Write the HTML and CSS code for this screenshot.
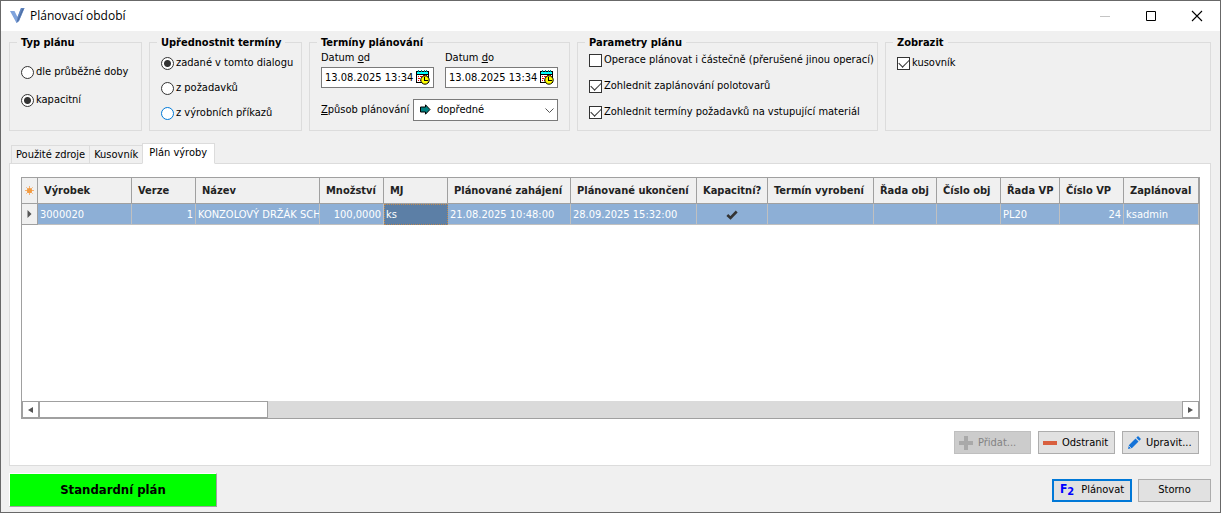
FILE: index.html
```html
<!DOCTYPE html>
<html lang="cs">
<head>
<meta charset="utf-8">
<title>Plánovací období</title>
<link rel="stylesheet" href="styles.css">
</head>
<body>
<div class="window">
  <header class="titlebar">
    <svg class="logo" width="16" height="16" viewBox="0 0 16 16" aria-hidden="true"><path d="M1 3h4.500l3 6L12 0h3.500L10 13l-2.500 2z" fill="#7fa3dc"/><path d="M12 0h3.500L10 13l-2.500 2 1-6z" fill="#5f83bd"/><path d="M13.500 1h1L9 13l-1 .5z" fill="#4a6a9c"/></svg>
    <h1 class="title">Plánovací období</h1>
    <div class="caption-buttons">
      <button class="caption" aria-label="Minimalizovat" disabled><svg width="12" height="12" viewBox="0 0 12 12"><path d="M1 6.500h10" stroke="#c4c4c4"/></svg></button>
      <button class="caption" aria-label="Maximalizovat"><svg width="12" height="12" viewBox="0 0 12 12"><path d="M1.500 1.500h9v9h-9z" fill="none" stroke="#000"/></svg></button>
      <button class="caption" aria-label="Zavřít"><svg width="12" height="12" viewBox="0 0 12 12"><path d="M1 1l10 10M11 1L1 11" stroke="#000" stroke-width="1.100"/></svg></button>
    </div>
  </header>

  <main class="content">
    <div class="groups">
      <fieldset class="group">
        <legend>Typ plánu</legend>
        <div class="options options-wide">
          <label class="option"><input type="radio" name="typ">dle průběžné doby</label>
          <label class="option"><input type="radio" name="typ" checked>kapacitní</label>
        </div>
      </fieldset>
      <fieldset class="group">
        <legend>Upřednostnit termíny</legend>
        <div class="options">
          <label class="option"><input type="radio" name="terminy" checked>zadané v tomto dialogu</label>
          <label class="option"><input type="radio" name="terminy">z požadavků</label>
          <label class="option"><input type="radio" name="terminy" class="hot">z výrobních příkazů</label>
        </div>
      </fieldset>
      <fieldset class="group">
        <legend>Termíny plánování</legend>
        <div class="dates">
          <div class="date">
            <label for="od">Datum <u>o</u>d</label>
            <div class="date-box"><input id="od" type="text" value="13.08.2025 13:34"><button class="cal" aria-label="Vybrat datum od"><svg width="14" height="15" viewBox="0 0 14 15" shape-rendering="crispEdges"><path d="M0 1h13v12H0z" fill="#000"/><path d="M1 5h11v7H1z" fill="#fff"/><path d="M1 2h11v2H1z" fill="#0ff"/><path d="M2 0h1v2H2zM5 0h1v2H5zM8 0h1v2H8zM10 0h1v2h-1z" fill="#088"/><path d="M2 6h1v1H2zM4 6h2v1H4zM7 5h2v1H7zM2 8h2v1H2zM5 8h1v1H5zM2 10h1v1H2zM4 10h1v1H4zM10 5h1v1h-1z" fill="#e00"/><circle cx="9" cy="10" r="4.200" fill="#ff0" stroke="#000" shape-rendering="auto"/><path d="M8 7h1v4H8zM9 10h3v1H9z" fill="#000"/></svg></button></div>
          </div>
          <div class="date">
            <label for="do">Datum <u>d</u>o</label>
            <div class="date-box"><input id="do" type="text" value="13.08.2025 13:34"><button class="cal" aria-label="Vybrat datum do"><svg width="14" height="15" viewBox="0 0 14 15" shape-rendering="crispEdges"><path d="M0 1h13v12H0z" fill="#000"/><path d="M1 5h11v7H1z" fill="#fff"/><path d="M1 2h11v2H1z" fill="#0ff"/><path d="M2 0h1v2H2zM5 0h1v2H5zM8 0h1v2H8zM10 0h1v2h-1z" fill="#088"/><path d="M2 6h1v1H2zM4 6h2v1H4zM7 5h2v1H7zM2 8h2v1H2zM5 8h1v1H5zM2 10h1v1H2zM4 10h1v1H4zM10 5h1v1h-1z" fill="#e00"/><circle cx="9" cy="10" r="4.200" fill="#ff0" stroke="#000" shape-rendering="auto"/><path d="M8 7h1v4H8zM9 10h3v1H9z" fill="#000"/></svg></button></div>
          </div>
        </div>
        <div class="method">
          <label for="zpusob"><u>Z</u>působ plánování</label>
          <div class="combo">
            <select id="zpusob"><option>dopředné</option></select>
            <svg class="combo-icon" width="11" height="11" viewBox="0 0 11 11" aria-hidden="true"><path d="M.5 3h5V.8L10 5.500 5.500 10.200V8h-5z" fill="#008080" stroke="#000"/></svg>
            <svg class="combo-arrow" width="9" height="6" viewBox="0 0 9 6" aria-hidden="true"><path d="M.5 .5l4 4 4-4" fill="none" stroke="#555"/></svg>
          </div>
        </div>
      </fieldset>
      <fieldset class="group">
        <legend>Parametry plánu</legend>
        <div class="options options-checks">
          <label class="option"><input type="checkbox">Operace plánovat i částečně (přerušené jinou operací)</label>
          <label class="option"><input type="checkbox" checked>Zohlednit zaplánování polotovarů</label>
          <label class="option"><input type="checkbox" checked>Zohlednit termíny požadavků na vstupující materiál</label>
        </div>
      </fieldset>
      <fieldset class="group">
        <legend>Zobrazit</legend>
        <div class="options">
          <label class="option"><input type="checkbox" checked>kusovník</label>
        </div>
      </fieldset>
    </div>

    <div class="tabs" role="tablist">
      <button class="tab" role="tab">Použité zdroje</button>
      <button class="tab" role="tab">Kusovník</button>
      <button class="tab active" role="tab" aria-selected="true">Plán výroby</button>
    </div>

    <section class="page">
      <div class="grid">
        <table>
          <colgroup><col class="c-mark"><col class="c-94"><col class="c-64"><col class="c-124"><col class="c-64"><col class="c-64"><col class="c-123"><col class="c-126"><col class="c-71"><col class="c-106"><col class="c-63"><col class="c-64"><col class="c-59"><col class="c-64"><col></colgroup>
          <thead><tr>
            <th class="mark"><svg width="9" height="9" viewBox="0 0 9 9" aria-label="Řádky"><path d="M4.500 0v9M0 4.500h9M1.300 1.300l6.400 6.400M7.700 1.300L1.300 7.700" stroke="#f4b070"/><circle cx="4.500" cy="4.500" r="2.600" fill="#f29a40"/></svg></th>
            <th>Výrobek</th><th>Verze</th><th>Název</th><th>Množství</th><th>MJ</th><th>Plánované zahájení</th><th>Plánované ukončení</th><th>Kapacitní?</th><th>Termín vyrobení</th><th>Řada obj</th><th>Číslo obj</th><th>Řada VP</th><th>Číslo VP</th><th>Zaplánoval</th>
          </tr></thead>
          <tbody><tr>
            <td class="mark"><svg width="5" height="8" viewBox="0 0 5 8" aria-hidden="true"><path d="M.5 0l4 4-4 4z" fill="#555"/></svg></td>
            <td>3000020</td><td class="num">1</td><td>KONZOLOVÝ DRŽÁK SCH</td><td class="num">100,0000</td><td class="focus">ks</td><td>21.08.2025 10:48:00</td><td>28.09.2025 15:32:00</td>
            <td class="tick"><svg width="12" height="10" viewBox="0 0 12 10" aria-label="Ano"><path d="M1.300 5l3.200 3L10.700 1.500" fill="none" stroke="#333" stroke-width="2.600"/></svg></td>
            <td></td><td></td><td></td><td>PL20</td><td class="num">24</td><td>ksadmin</td>
          </tr></tbody>
        </table>
        <div class="scrollbar">
          <button class="scroll-btn" aria-label="Vlevo"><svg width="5" height="6" viewBox="0 0 5 6"><path d="M5 0v6L0 3z" fill="#555"/></svg></button>
          <div class="track"><div class="thumb"></div></div>
          <button class="scroll-btn" aria-label="Vpravo"><svg width="5" height="6" viewBox="0 0 5 6"><path d="M0 0v6l5-3z" fill="#555"/></svg></button>
        </div>
      </div>
      <div class="actions">
        <button class="btn" disabled><svg width="16" height="16" viewBox="0 0 16 16" aria-hidden="true"><path d="M6 1h4v5h5v4h-5v5H6v-5H1V6h5z" fill="#a9a9a9"/></svg><span>Přidat...</span></button>
        <button class="btn"><svg width="16" height="16" viewBox="0 0 16 16" aria-hidden="true"><path d="M1 6h14v4H1z" fill="#d9603f"/></svg><span>Odstranit</span></button>
        <button class="btn"><svg width="16" height="16" viewBox="0 0 16 16" aria-hidden="true"><path d="M2 14l1-4 6.500-6.500 3 3L6 13zM10.300 2.700L12 1l3 3-1.700 1.700z" fill="#1473d8"/><path d="M2.800 10.800l2.400 2.400" stroke="#e1e1e1" stroke-width=".8"/></svg><span>Upravit...</span></button>
      </div>
    </section>
  </main>

  <footer class="footer">
    <div class="status">Standardní plán</div>
    <button class="btn primary"><span class="key">F<span class="key-num">2</span></span><span>Plánovat</span></button>
    <button class="btn cancel"><span>Storno</span></button>
  </footer>
</div>
</body>
</html>
```
FILE: styles.css
```css
* { box-sizing: border-box; }
body {
  margin: 0;
  font: 11px/14px "DejaVu Sans Condensed", Tahoma, "DejaVu Sans", sans-serif;
  color: #000;
}
button, input, select { font: inherit; color: inherit; margin: 0; padding: 0; border-radius: 0; }
svg { display: block; flex: none; }
.window {
  display: flex;
  flex-direction: column;
  min-height: 100vh;
  background: #f0f0f0;
  border: 1px solid #686868;
}
.titlebar {
  display: flex;
  align-items: center;
  height: 30px;
  padding-left: 8px;
  background: #fff;
}
.title { flex: 1; margin: 0 0 0 5px; font-family: "Open Sans", sans-serif; font-size: 12px; font-weight: 400; line-height: 16px; }
.caption-buttons { display: flex; }
.caption {
  display: flex;
  align-items: center;
  justify-content: center;
  width: 46px;
  height: 28px;
  border: 0;
  background: none;
}
.content { flex: 1; display: flex; flex-direction: column; padding: 4px 9px 0 8px; }

.groups { display: grid; grid-template-columns: 133px 153px 261px 301px 1fr; gap: 7px; }
.group { min-width: 0; height: 96px; margin: 0; padding: 0 7px; border: 1px solid #dcdcdc; }
.group legend { padding: 1px 4px 0; line-height: 13px; font-weight: 700; white-space: nowrap; }
.options { display: flex; flex-direction: column; gap: 11px; padding: 7px 0 0 4px; }
.options-wide { gap: 14px; padding-top: 16px; }
.options-checks { gap: 12px; padding-top: 4px; }
.option { display: flex; align-items: center; gap: 2px; white-space: nowrap; }
.option input {
  appearance: none;
  flex: none;
  display: grid;
  place-items: center;
  width: 13px;
  height: 13px;
  border: 1px solid #333;
  background: #fff;
}
.option input[type="radio"] { border-radius: 50%; }
.option input[type="radio"]:checked { background: radial-gradient(circle, #333 0 3px, #fff 4px); }
.option input.hot { border-color: #0078d7; }
.option input[type="checkbox"]:checked::before {
  content: "";
  width: 9px;
  height: 5px;
  margin-bottom: 3px;
  border: solid #333;
  border-width: 0 0 1px 1px;
  transform: rotate(-45deg);
}

.dates { display: grid; grid-template-columns: 1fr 1fr; gap: 11px; padding: 2px 4px 0; }
.date { display: flex; flex-direction: column; gap: 2px; min-width: 0; }
.date-box { display: flex; align-items: center; height: 21px; padding: 0 3px; border: 1px solid #7a7a7a; background: #fff; }
.date-box input { flex: 1; min-width: 0; height: 19px; border: 0; background: none; outline: 0; }
.cal { flex: none; padding: 0; border: 0; background: none; }
.method { display: flex; align-items: center; justify-content: space-between; padding: 11px 4px 0; white-space: nowrap; }
.combo { position: relative; width: 145px; height: 22px; }
.combo select { appearance: none; width: 100%; height: 22px; padding: 0 20px 0 23px; border: 1px solid #7a7a7a; background: #fff; }
.combo-icon { position: absolute; left: 7px; top: 5px; pointer-events: none; }
.combo-arrow { position: absolute; right: 4px; top: 9px; pointer-events: none; }

.tabs { display: flex; align-items: flex-end; height: 21px; margin: 12px 0 -1px 2px; }
.tab { height: 19px; padding: 0 4px; border: 1px solid #dcdcdc; border-right: 0; background: #f0f0f0; white-space: nowrap; }
.tab.active { z-index: 1; height: 21px; padding: 0 7px 2px 6px; border: 1px solid #dcdcdc; border-bottom-color: #fff; background: #fff; }
.page { flex: 1; display: flex; flex-direction: column; padding: 13px 10px 11px 11px; border: 1px solid #dcdcdc; background: #fff; }

.grid { flex: 1; display: flex; flex-direction: column; justify-content: space-between; border: 1px solid #a0a0a0; overflow: hidden; }
table { width: 100%; table-layout: fixed; border-collapse: separate; border-spacing: 0; }
.c-mark { width: 16px; }
.c-59 { width: 59px; }
.c-63 { width: 63px; }
.c-64 { width: 64px; }
.c-71 { width: 71px; }
.c-94 { width: 94px; }
.c-106 { width: 106px; }
.c-123 { width: 123px; }
.c-124 { width: 124px; }
.c-126 { width: 126px; }
th, td { overflow: hidden; white-space: nowrap; text-align: left; }
th { height: 26px; padding: 0 0 0 6px; border: solid #a0a0a0; border-width: 0 1px 1px 0; background: #f0f0f0; color: #222; }
td { height: 21px; padding: 1px 2px 0; border: solid #c0c0c0; border-width: 0 1px 1px 0; background: #8dafd6; color: #fff; }
td.num { text-align: right; }
td.focus { padding: 0 1px; border: 1px dotted #c08a50; background: #5c7fa6; }
th.mark, td.mark { padding: 0; background: #f0f0f0; border-color: #a0a0a0; }
.mark svg, .tick svg { margin: 0 auto; }
.scrollbar { display: flex; height: 17px; background: #dadada; }
.scroll-btn { display: flex; align-items: center; justify-content: center; width: 17px; height: 17px; border: 1px solid #a0a0a0; background: #fff; }
.track { flex: 1; }
.thumb { width: 20%; height: 17px; border: 1px solid #a0a0a0; background: #fff; }

.actions { display: flex; justify-content: flex-end; gap: 7px; margin-top: 12px; padding-right: 1px; }
.btn {
  display: flex;
  align-items: center;
  justify-content: center;
  gap: 4px;
  width: 77px;
  height: 23px;
  border: 1px solid #adadad;
  background: #e1e1e1;
  white-space: nowrap;
}
.actions .btn { justify-content: flex-start; padding-left: 3px; }
.btn:disabled { border-color: #bfbfbf; background: #ccc; color: #838383; }
.footer { display: flex; align-items: center; gap: 6px; padding: 7px 9px 5px 8px; }
.status {
  width: 208px;
  height: 34px;
  margin-right: auto;
  border: 1px solid #a0a0a0;
  border-color: #fff #a0a0a0 #a0a0a0 #fff;
  background: #0f0;
  font-size: 13px;
  font-weight: 700;
  line-height: 32px;
  text-align: center;
}
.primary { width: 80px; border: 2px solid #0078d7; gap: 7px; }
.key { color: #00f; font-weight: 700; font-size: 12px; }
.key-num { font-size: 11px; vertical-align: -2px; }
.cancel { width: 73px; }
```
